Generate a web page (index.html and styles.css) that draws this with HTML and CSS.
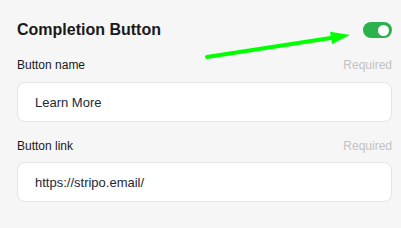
FILE: index.html
```html
<!DOCTYPE html>
<html>
<head>
<meta charset="utf-8">
<link rel="stylesheet" href="styles.css">
</head>
<body>
<div class="panel">
  <div class="header">
    <h2 class="title">Completion Button</h2>
    <span class="toggle"><span class="knob"></span></span>
  </div>
  <div class="field">
    <div class="label-row"><span class="label">Button name</span><span class="req">Required</span></div>
    <div class="input">Learn More</div>
  </div>
  <div class="field second">
    <div class="label-row"><span class="label">Button link</span><span class="req">Required</span></div>
    <div class="input">https://stripo.email/</div>
  </div>
</div>
<svg class="arrow" width="401" height="228" viewBox="0 0 401 228">
  <line x1="207" y1="57" x2="334" y2="37.5" stroke="#00ff00" stroke-width="4" stroke-linecap="round"/>
  <polygon points="350,35 332.1,44 330.1,31.8" fill="#00ff00"/>
</svg>
</body>
</html>
```
FILE: styles.css
```css
html, body {
  margin: 0;
  padding: 0;
  background: #f6f6f6;
}
body {
  width: 401px;
  height: 228px;
  overflow: hidden;
  position: relative;
  font-family: "Liberation Sans", Arial, sans-serif;
}
.panel {
  padding: 22px 9px 0 17px;
  display: flex;
  flex-direction: column;
}
.header {
  display: flex;
  justify-content: space-between;
  align-items: center;
  height: 16px;
}
.title {
  margin: 0;
  font-size: 16px;
  line-height: 16px;
  font-weight: 700;
  color: #1a1a1a;
}
.toggle {
  width: 29px;
  height: 16px;
  border-radius: 8px;
  background: #2bb24c;
  display: flex;
  align-items: center;
  justify-content: flex-end;
  padding-right: 3px;
  box-sizing: border-box;
}
.knob {
  width: 11px;
  height: 11px;
  border-radius: 50%;
  background: #ffffff;
}
.field {
  margin-top: 19px;
  display: flex;
  flex-direction: column;
  gap: 9px;
}
.field.second {
  margin-top: 16px;
  gap: 8px;
}
.label-row {
  display: flex;
  justify-content: space-between;
  height: 16px;
  font-size: 12px;
  line-height: 16px;
}
.label {
  color: #1a1a1a;
}
.req {
  color: #c2c2c2;
}
.input {
  height: 40px;
  box-sizing: border-box;
  border: 1px solid #e4e4e4;
  border-radius: 8px;
  background: #ffffff;
  padding: 0 16px 0 17px;
  display: flex;
  align-items: center;
  font-size: 13px;
  color: #1d2838;
}
.arrow {
  position: absolute;
  left: 0;
  top: 0;
  pointer-events: none;
}
```
